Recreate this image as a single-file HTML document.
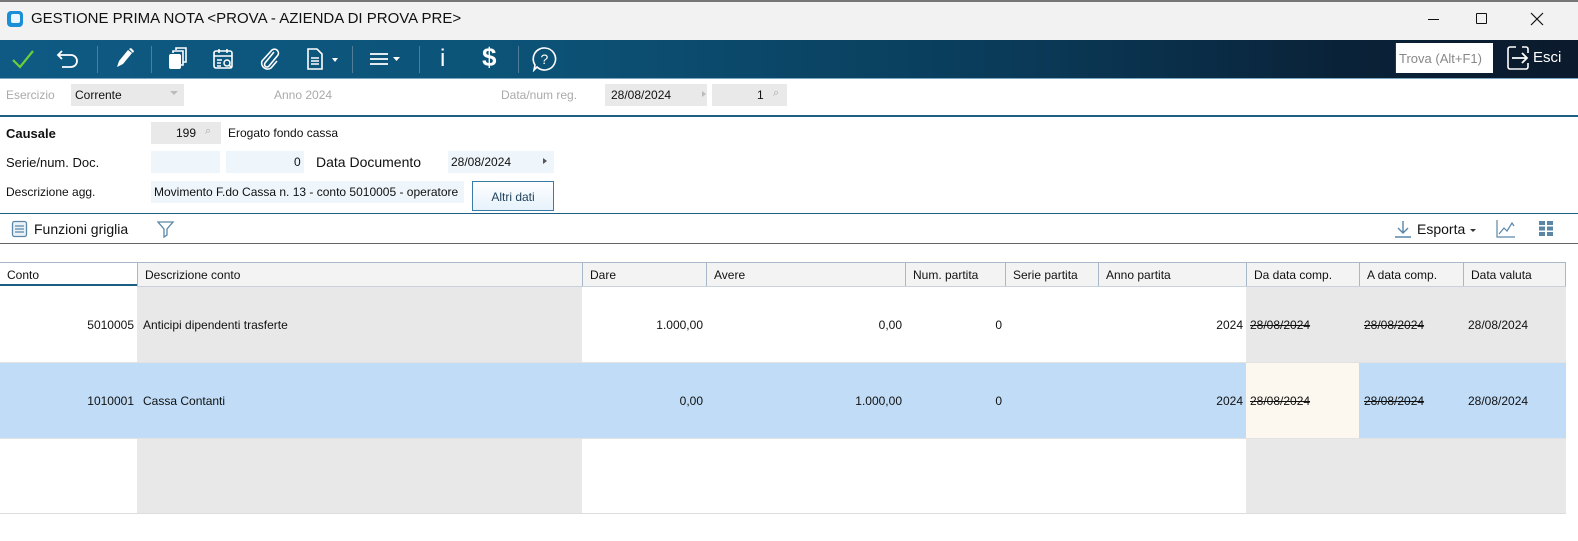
<!DOCTYPE html>
<html><head><meta charset="utf-8"><style>
*{margin:0;padding:0;box-sizing:border-box}
body{width:1578px;height:541px;overflow:hidden;background:#fff;font-family:"Liberation Sans",sans-serif;font-size:12px;color:#111;position:relative}
.a{position:absolute;white-space:nowrap}
.tb{position:absolute;left:0;top:40px;width:1578px;height:38px;background:linear-gradient(90deg,#0e5a84 0%,#0c5276 35%,#0a3a58 65%,#0a2238 85%,#0b1a2c 100%)}
.sep{position:absolute;top:6px;width:1px;height:27px;background:#4f7d9a}
.f{position:absolute;background:#e9e9e9;height:22px}
.fb{position:absolute;background:#eef5fb;height:22px}
.col{position:absolute;top:263px;height:23px;border-left:1px solid #a9b8c8;background:#f3f3f3;padding:5px 0 0 7px;font-size:12px}
.cell{position:absolute;font-size:12px}
.g{position:absolute;background:#e8e8e8}
</style></head><body>
<!-- title bar -->
<div class="a" style="left:0;top:0;width:1578px;height:40px;background:#f2f2f2;border-top:2px solid #777"></div>
<div class="a" style="left:7px;top:11px;width:16px;height:16px;border-radius:4px;background:#1a8fd6"></div>
<div class="a" style="left:11px;top:14px;width:9px;height:9px;border-radius:2px;background:#eaf5fd"></div>
<div class="a" style="left:31px;top:10px;font-size:15px;color:#111">GESTIONE PRIMA NOTA &lt;PROVA - AZIENDA DI PROVA PRE&gt;</div>
<div class="a" style="left:1428px;top:19px;width:11px;height:1px;background:#111"></div>
<div class="a" style="left:1476px;top:13px;width:11px;height:11px;border:1px solid #111;border-radius:1px"></div>
<svg class="a" style="left:1530px;top:12px" width="14" height="14"><path d="M1 1L13 13M13 1L1 13" stroke="#111" stroke-width="1.2"/></svg>
<!-- toolbar -->
<div class="tb">
<svg class="a" style="left:11px;top:8px" width="24" height="22"><path d="M2 12l7 7L22 3" stroke="#6ccf3a" stroke-width="2.2" fill="none"/></svg>
<svg class="a" style="left:56px;top:8px" width="26" height="22"><path d="M6 3L2 7l4 4M2 7h13a6 6 0 0 1 0 12H6" stroke="#fff" stroke-width="1.8" fill="none"/></svg>
<div class="sep" style="left:97px"></div>
<svg class="a" style="left:113px;top:7px" width="22" height="24"><path d="M4 20l2-6L15 3l4 3-9 11z" fill="#fff"/><path d="M16 2l2-1 3 3-1 2z" fill="#fff"/></svg>
<div class="sep" style="left:151px"></div>
<svg class="a" style="left:166px;top:7px" width="24" height="24"><rect x="3" y="7" width="12" height="15" rx="2" fill="#fff"/><path d="M7 6V4h10v14h-2M10 3V1h10v14h-3" stroke="#fff" stroke-width="1.6" fill="none"/></svg>
<svg class="a" style="left:212px;top:7px" width="24" height="24"><rect x="2" y="4" width="18" height="17" rx="2" stroke="#fff" stroke-width="1.6" fill="none"/><path d="M2 9h18M7 2v4M15 2v4M5 13h5M5 16h4M5 19h4" stroke="#fff" stroke-width="1.5"/><circle cx="15" cy="16" r="3" stroke="#fff" stroke-width="1.5" fill="none"/><path d="M17 18l3 3" stroke="#fff" stroke-width="1.6"/></svg>
<svg class="a" style="left:258px;top:7px" width="22" height="24"><path d="M16 5L7 16a2.5 2.5 0 0 0 4 3l9-11a4 4 0 0 0-6-5L4 14a6 6 0 0 0 9 7l6-7" stroke="#fff" stroke-width="1.6" fill="none"/></svg>
<svg class="a" style="left:305px;top:7px" width="36" height="24"><path d="M3 2h9l5 5v15H3z" stroke="#fff" stroke-width="1.6" fill="none"/><path d="M6 11h8M6 14h8M6 17h8" stroke="#fff" stroke-width="1.4"/><path d="M27 11h6l-3 4z" fill="#fff"/></svg>
<div class="sep" style="left:352px"></div>
<svg class="a" style="left:368px;top:8px" width="36" height="22"><path d="M2 6h18M2 11h18M2 16h18" stroke="#fff" stroke-width="1.8"/><path d="M25 9h7l-3.5 4z" fill="#fff"/></svg>
<div class="sep" style="left:419px"></div>
<div class="a" style="left:440px;top:5px;font-size:24px;color:#fff">i</div>
<div class="a" style="left:482px;top:2px;font-size:26px;color:#fff;font-weight:bold">$</div>
<div class="sep" style="left:518px"></div>
<svg class="a" style="left:532px;top:6px" width="26" height="26"><path d="M13 2a11 11 0 1 1-8 19l-3 3 1-5A11 11 0 0 1 13 2z" stroke="#fff" stroke-width="1.6" fill="none"/><text x="8.5" y="18" font-size="14" fill="#fff" font-family="Liberation Sans">?</text></svg>
<div class="a" style="left:1395px;top:3px;width:98px;height:30px;background:#fff;font-size:13px;color:#888;padding:8px 0 0 3px;border-left:1px solid #333">Trova (Alt+F1)</div>
<svg class="a" style="left:1506px;top:5px" width="26" height="26"><path d="M10 2H4a2 2 0 0 0-2 2v18a2 2 0 0 0 2 2h16a2 2 0 0 0 2-2v-4M22 8V4a2 2 0 0 0-2-2h-4" stroke="#fff" stroke-width="1.6" fill="none"/><path d="M6 13h15M16 8l5 5-5 5" stroke="#fff" stroke-width="1.8" fill="none"/></svg>
<div class="a" style="left:1533px;top:9px;font-size:15px;color:#fff">Esci</div>
</div>
<div class="a" style="left:0;top:78px;width:1578px;height:1px;background:#7aa7c2"></div>
<!-- row 1 -->
<div class="a" style="left:6px;top:88px;color:#aaa">Esercizio</div>
<div class="f" style="left:71px;top:84px;width:113px"></div>
<div class="a" style="left:75px;top:88px;color:#111">Corrente</div>
<div class="a" style="left:170px;top:91px;border-left:4px solid transparent;border-right:4px solid transparent;border-top:4px solid #bbb"></div>
<div class="a" style="left:274px;top:88px;color:#aaa">Anno 2024</div>
<div class="a" style="left:501px;top:88px;color:#aaa">Data/num reg.</div>
<div class="f" style="left:605px;top:84px;width:102px"></div>
<div class="a" style="left:611px;top:88px">28/08/2024</div>
<div class="a" style="left:702px;top:91px;border-top:3px solid transparent;border-bottom:3px solid transparent;border-left:4px solid #bbb"></div>
<div class="f" style="left:712px;top:84px;width:75px"></div>
<div class="a" style="left:757px;top:88px">1</div>
<div class="a" style="left:773px;top:87px;color:#aaa;font-size:11px">⌕</div>
<div class="a" style="left:0;top:115px;width:1578px;height:2px;background:#1d5f84"></div>
<!-- form -->
<div class="a" style="left:6px;top:126px;font-size:13px;font-weight:bold">Causale</div>
<div class="f" style="left:151px;top:122px;width:70px"></div>
<div class="a" style="left:176px;top:126px">199</div>
<div class="a" style="left:205px;top:125px;color:#aaa;font-size:11px">⌕</div>
<div class="a" style="left:228px;top:126px">Erogato fondo cassa</div>
<div class="a" style="left:6px;top:155px;font-size:13px">Serie/num. Doc.</div>
<div class="fb" style="left:151px;top:151px;width:69px"></div>
<div class="fb" style="left:226px;top:151px;width:78px"></div>
<div class="a" style="left:294px;top:155px">0</div>
<div class="a" style="left:316px;top:154px;font-size:14px">Data Documento</div>
<div class="fb" style="left:448px;top:151px;width:106px"></div>
<div class="a" style="left:451px;top:155px">28/08/2024</div>
<div class="a" style="left:543px;top:158px;border-top:3px solid transparent;border-bottom:3px solid transparent;border-left:4px solid #555"></div>
<div class="a" style="left:6px;top:185px">Descrizione agg.</div>
<div class="fb" style="left:151px;top:181px;width:313px;overflow:hidden"><span style="position:absolute;left:3px;top:4px;white-space:nowrap">Movimento F.do Cassa n. 13 - conto 5010005 - operatore</span></div>
<div class="a" style="left:472px;top:181px;width:82px;height:30px;border:1px solid #3a7ca5;background:linear-gradient(#fff,#e6f2fb);text-align:center;padding-top:8px;color:#1d3f5a">Altri dati</div>
<div class="a" style="left:0;top:213px;width:1578px;height:1px;background:#1d5f84"></div>
<!-- grid toolbar -->
<svg class="a" style="left:11px;top:220px" width="18" height="18"><rect x="1.5" y="1.5" width="14" height="15" rx="2" stroke="#5a86a8" stroke-width="1.3" fill="#eaf2f8"/><path d="M4 6h9M4 9h9M4 12h9" stroke="#5a86a8" stroke-width="1.2"/></svg>
<div class="a" style="left:34px;top:221px;font-size:14px">Funzioni griglia</div>
<svg class="a" style="left:157px;top:220px" width="18" height="18"><path d="M1 2h15l-6 7v6l-3 2V9z" stroke="#5a86a8" stroke-width="1.3" fill="none"/></svg>
<svg class="a" style="left:1394px;top:220px" width="18" height="18"><path d="M9 1v12M4 8l5 5 5-5M1 17h16" stroke="#5a86a8" stroke-width="1.4" fill="none"/></svg>
<div class="a" style="left:1417px;top:221px;font-size:14px">Esporta</div>
<div class="a" style="left:1470px;top:229px;border-left:3px solid transparent;border-right:3px solid transparent;border-top:3px solid #333"></div>
<svg class="a" style="left:1496px;top:219px" width="20" height="20"><path d="M1 1v17h18" stroke="#5a86a8" stroke-width="1.2" fill="none"/><path d="M3 15l5-6 3 3 5-8 2 3" stroke="#5a86a8" stroke-width="1.2" fill="none"/></svg>
<svg class="a" style="left:1539px;top:221px" width="14" height="15"><g fill="#5a86a8"><rect x="0" y="0" width="6" height="4"/><rect x="8" y="0" width="6" height="4"/><rect x="0" y="5.5" width="6" height="4"/><rect x="8" y="5.5" width="6" height="4"/><rect x="0" y="11" width="6" height="4"/><rect x="8" y="11" width="6" height="4"/></g></svg>
<div class="a" style="left:0;top:243px;width:1578px;height:1px;background:#666"></div>
<!-- grid -->
<div class="a" style="left:0;top:262px;width:1566px;height:1px;background:#a9b8c8"></div>
<div class="col" style="left:0;width:137px;background:#fff;border-left:none;border-bottom:2px solid #1d5f84">Conto</div>
<div class="col" style="left:137px;width:445px">Descrizione conto</div>
<div class="col" style="left:582px;width:124px">Dare</div>
<div class="col" style="left:706px;width:199px">Avere</div>
<div class="col" style="left:905px;width:100px">Num. partita</div>
<div class="col" style="left:1005px;width:93px">Serie partita</div>
<div class="col" style="left:1098px;width:148px">Anno partita</div>
<div class="col" style="left:1246px;width:113px">Da data comp.</div>
<div class="col" style="left:1359px;width:104px">A data comp.</div>
<div class="col" style="left:1463px;width:103px;border-right:1px solid #a9b8c8">Data valuta</div>
<div class="a" style="left:137px;top:286px;width:1429px;height:1px;background:#c8d2dc"></div>
<!-- grey cols -->
<div class="g" style="left:137px;top:287px;width:445px;height:75px"></div>
<div class="g" style="left:1246px;top:287px;width:320px;height:75px"></div>
<div class="a" style="left:0;top:363px;width:1566px;height:75px;background:#c0dcf6"></div>
<div class="a" style="left:1246px;top:363px;width:113px;height:75px;background:#fcf8ef"></div>
<div class="g" style="left:137px;top:439px;width:445px;height:74px"></div>
<div class="g" style="left:1246px;top:439px;width:320px;height:74px"></div>
<div class="a" style="left:0;top:362px;width:1566px;height:1px;background:#e2e2e2"></div>
<div class="a" style="left:0;top:438px;width:1566px;height:1px;background:#e2e2e2"></div>
<div class="a" style="left:0;top:513px;width:1566px;height:1px;background:#ddd"></div>
<!-- row data -->
<div class="cell a" style="left:0;width:134px;text-align:right;top:318px">5010005</div>
<div class="cell a" style="left:143px;top:318px">Anticipi dipendenti trasferte</div>
<div class="cell a" style="left:582px;width:121px;text-align:right;top:318px">1.000,00</div>
<div class="cell a" style="left:706px;width:196px;text-align:right;top:318px">0,00</div>
<div class="cell a" style="left:905px;width:97px;text-align:right;top:318px">0</div>
<div class="cell a" style="left:1098px;width:145px;text-align:right;top:318px">2024</div>
<div class="cell a" style="left:1250px;top:318px;text-decoration:line-through">28/08/2024</div>
<div class="cell a" style="left:1364px;top:318px;text-decoration:line-through">28/08/2024</div>
<div class="cell a" style="left:1468px;top:318px">28/08/2024</div>
<div class="cell a" style="left:0;width:134px;text-align:right;top:394px">1010001</div>
<div class="cell a" style="left:143px;top:394px">Cassa Contanti</div>
<div class="cell a" style="left:582px;width:121px;text-align:right;top:394px">0,00</div>
<div class="cell a" style="left:706px;width:196px;text-align:right;top:394px">1.000,00</div>
<div class="cell a" style="left:905px;width:97px;text-align:right;top:394px">0</div>
<div class="cell a" style="left:1098px;width:145px;text-align:right;top:394px">2024</div>
<div class="cell a" style="left:1250px;top:394px;text-decoration:line-through">28/08/2024</div>
<div class="cell a" style="left:1364px;top:394px;text-decoration:line-through">28/08/2024</div>
<div class="cell a" style="left:1468px;top:394px">28/08/2024</div>
</body></html>
